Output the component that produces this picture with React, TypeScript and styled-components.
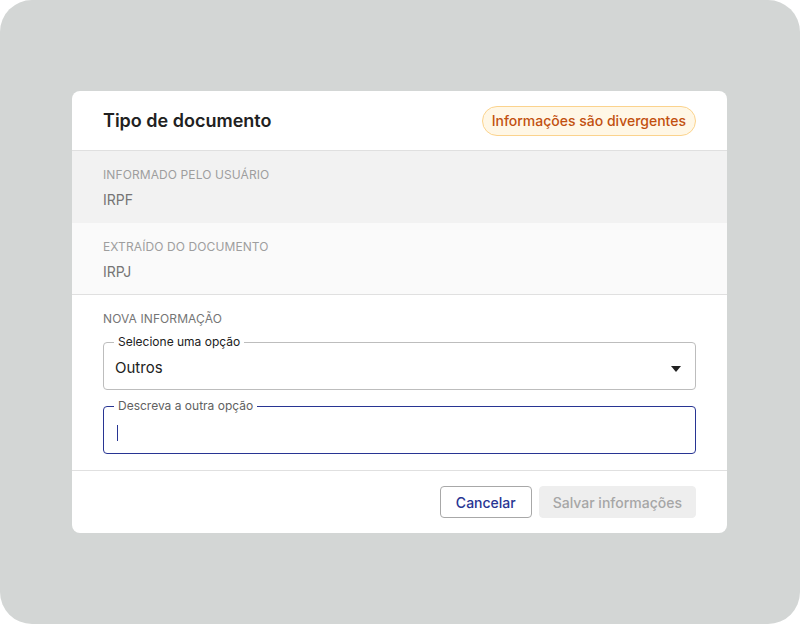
import React from "react";
import styled, { createGlobalStyle } from "styled-components";

const GlobalStyle = createGlobalStyle`
  html, body {
    margin: 0;
    padding: 0;
    background: #ffffff;
  }
  body {
    font-family: Inter, "Noto Sans", "Liberation Sans", sans-serif;
    -webkit-font-smoothing: antialiased;
  }
  * { box-sizing: border-box; }
`;

const Backdrop = styled.div`
  width: 800px;
  height: 624px;
  background: #d3d6d5;
  border-radius: 32px;
  display: flex;
  padding: 91px 0 0 72px;
`;

const Modal = styled.div`
  width: 655px;
  height: 442px;
  background: #ffffff;
  border-radius: 8px;
  overflow: hidden;
  display: flex;
  flex-direction: column;
`;

const Header = styled.div`
  height: 60px;
  padding: 0 31px;
  display: flex;
  align-items: center;
  justify-content: space-between;
  border-bottom: 1px solid #e0e0e0;
`;

const Title = styled.h2`
  margin: 0;
  font-size: 18px;
  font-weight: 600;
  color: #212121;
`;

const Badge = styled.span`
  height: 30px;
  padding: 0 9px;
  display: inline-flex;
  align-items: center;
  border: 1px solid #fbd38d;
  background: #fff7e6;
  border-radius: 15px;
  color: #c2500f;
  font-size: 14px;
  font-weight: 500;
`;

const InfoRow = styled.div<{ $bg: string; $border?: boolean }>`
  height: 72px;
  padding: 16px 31px 0;
  background: ${(p) => p.$bg};
  border-bottom: ${(p) => (p.$border ? "1px solid #e0e0e0" : "none")};
  display: flex;
  flex-direction: column;
  gap: 8px;
`;

const Caption = styled.div`
  font-size: 12px;
  color: #9e9e9e;
  line-height: 16px;
  letter-spacing: 0.1px;
`;

const Value = styled.div`
  font-size: 14px;
  color: #757575;
  line-height: 18px;
`;

const Section = styled.div`
  padding: 16px 31px 16px;
  border-bottom: 1px solid #e0e0e0;
  display: flex;
  flex-direction: column;
  gap: 16px;
`;

const SectionCaption = styled(Caption)`
  color: #757575;
  margin-bottom: -1px;
`;

const Field = styled.div<{ $focused?: boolean }>`
  position: relative;
  height: 48px;
  padding: 0 14px 0 11px;
  border: 1px solid ${(p) => (p.$focused ? "#283593" : "#bdbdbd")};
  border-radius: 4px;
  display: flex;
  align-items: center;
  justify-content: space-between;
`;

const Label = styled.span<{ $muted?: boolean }>`
  position: absolute;
  left: 10px;
  top: -8px;
  padding: 0 4px;
  background: #ffffff;
  font-size: 12px;
  line-height: 14px;
  color: ${(p) => (p.$muted ? "#616161" : "#212121")};
`;

const FieldText = styled.span`
  font-size: 15px;
  color: #212121;
  margin-top: 2px;
`;

const Caret = styled.span`
  width: 1px;
  height: 16px;
  margin-left: 2px;
  margin-top: 5px;
  background: #283593;
`;

const Arrow = styled.svg`
  margin-top: 5px;
`;

const Footer = styled.div`
  flex: 1;
  padding: 0 31px;
  display: flex;
  align-items: center;
  justify-content: flex-end;
  gap: 7px;
`;

const Button = styled.button<{ $variant: "outline" | "disabled" }>`
  height: 32px;
  padding: 0 ${(p) => (p.$variant === "outline" ? "15px" : "13px")};
  border-radius: 4px;
  font-family: inherit;
  font-size: 14px;
  font-weight: 500;
  cursor: pointer;
  border: 1px solid ${(p) => (p.$variant === "outline" ? "#a8a8a8" : "#eeeeee")};
  background: ${(p) => (p.$variant === "outline" ? "#ffffff" : "#eeeeee")};
  color: ${(p) => (p.$variant === "outline" ? "#283593" : "#a6a6a6")};
`;

const App = () => {
  return (
    <>
      <GlobalStyle />
      <Backdrop>
        <Modal>
          <Header>
            <Title>Tipo de documento</Title>
            <Badge>Informações são divergentes</Badge>
          </Header>
          <InfoRow $bg="#f2f2f2">
            <Caption>INFORMADO PELO USUÁRIO</Caption>
            <Value>IRPF</Value>
          </InfoRow>
          <InfoRow $bg="#fafafa" $border>
            <Caption>EXTRAÍDO DO DOCUMENTO</Caption>
            <Value>IRPJ</Value>
          </InfoRow>
          <Section>
            <SectionCaption>NOVA INFORMAÇÃO</SectionCaption>
            <Field>
              <Label>Selecione uma opção</Label>
              <FieldText>Outros</FieldText>
              <Arrow width="10" height="6" viewBox="0 0 10 6">
                <path d="M0 0h10L5 6z" fill="#212121" />
              </Arrow>
            </Field>
            <Field $focused>
              <Label $muted>Descreva a outra opção</Label>
              <Caret />
            </Field>
          </Section>
          <Footer>
            <Button $variant="outline">Cancelar</Button>
            <Button $variant="disabled">Salvar informações</Button>
          </Footer>
        </Modal>
      </Backdrop>
    </>
  );
};

export default App;
